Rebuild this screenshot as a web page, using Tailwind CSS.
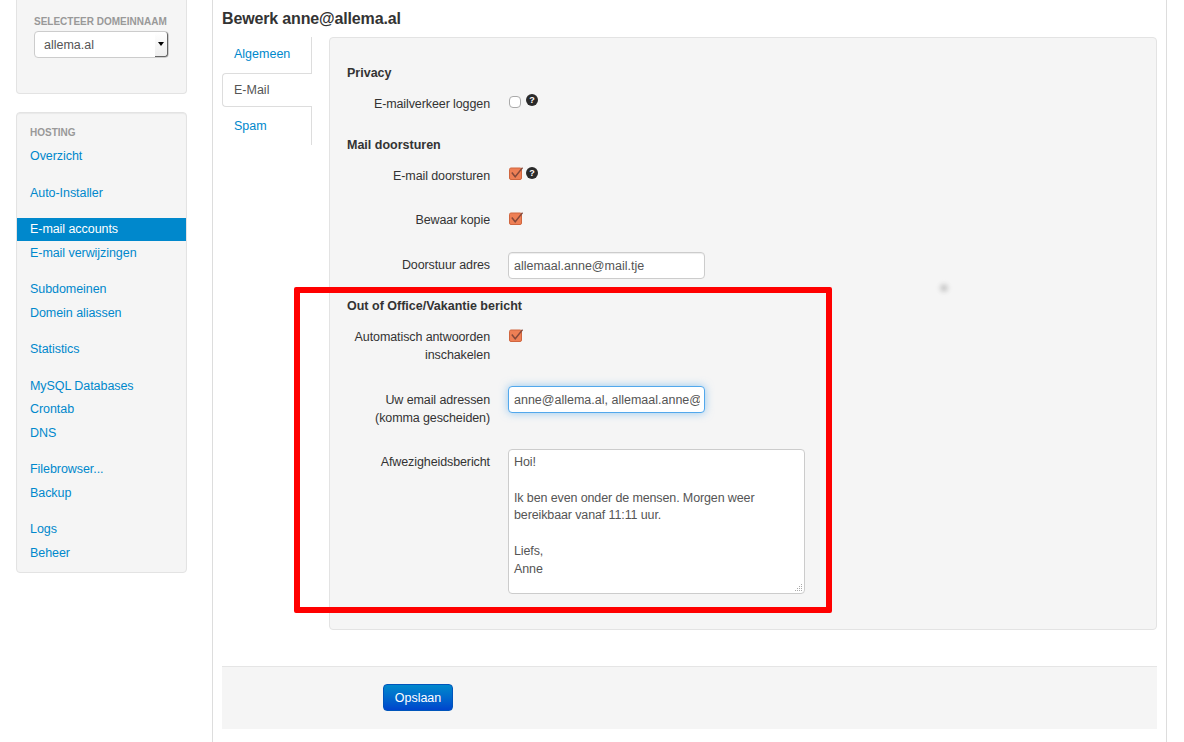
<!DOCTYPE html>
<html lang="nl">
<head>
    <meta charset="UTF-8">
    <title>Bewerk anne@allema.al</title>
    <script src="https://cdn.jsdelivr.net/npm/@tailwindcss/browser@4"></script>
</head>
<body class="relative flex w-[1184px] h-[742px] overflow-hidden bg-white text-[12.5px] leading-[18px] text-[#333] font-['Liberation_Sans',Arial,sans-serif]">

    <!-- Sidebar -->
    <aside class="ml-4 w-[171px] shrink-0">
        <div class="h-[94px] pt-[13px] pl-[17px] bg-[#f5f5f5] border-x border-b border-[#e3e3e3] rounded-b">
            <div class="text-[10px] leading-[18px] font-bold uppercase text-[#999]">Selecteer domeinnaam</div>
            <div class="relative w-[135px] h-[27px] pl-[9px] flex items-center bg-white border border-[#ccc] rounded text-[#555]">
                allema.al
                <span class="absolute right-0 top-0 bottom-0 w-[13px] flex items-center justify-center bg-gradient-to-b from-white to-[#eee] border-r border-b border-[#666] rounded-r-[3px]">
                    <span class="w-0 h-0 border-x-[3px] border-x-transparent border-t-[4px] border-t-black"></span>
                </span>
            </div>
        </div>

        <nav class="mt-[18px] h-[461px] pt-[11px] bg-[#f5f5f5] border border-[#e3e3e3] rounded shadow-[inset_0_1px_1px_rgba(0,0,0,0.05)]">
            <div class="pl-[13px] text-[10px] font-bold uppercase text-[#999]">Hosting</div>
            <ul class="mt-[2px] text-[#0088cc] tracking-[-0.06px]">
                <li class="h-6 pl-[13px] leading-6"><a href="#">Overzicht</a></li>
                <li class="h-6 pl-[13px] leading-6 mt-[13px]"><a href="#">Auto-Installer</a></li>
                <li class="h-[23px] pl-[13px] leading-[22px] mt-[13px] bg-[#0088cc] text-white"><a href="#">E-mail accounts</a></li>
                <li class="h-6 pl-[13px] leading-6"><a href="#">E-mail verwijzingen</a></li>
                <li class="h-6 pl-[13px] leading-6 mt-3"><a href="#">Subdomeinen</a></li>
                <li class="h-6 pl-[13px] leading-6"><a href="#">Domein aliassen</a></li>
                <li class="h-6 pl-[13px] leading-6 mt-3"><a href="#">Statistics</a></li>
                <li class="h-[23px] pl-[13px] leading-6 mt-[13px]"><a href="#">MySQL Databases</a></li>
                <li class="h-6 pl-[13px] leading-6"><a href="#">Crontab</a></li>
                <li class="h-6 pl-[13px] leading-6"><a href="#">DNS</a></li>
                <li class="h-6 pl-[13px] leading-6 mt-3"><a href="#">Filebrowser...</a></li>
                <li class="h-6 pl-[13px] leading-6"><a href="#">Backup</a></li>
                <li class="h-6 pl-[13px] leading-6 mt-3"><a href="#">Logs</a></li>
                <li class="h-6 pl-[13px] leading-6"><a href="#">Beheer</a></li>
            </ul>
        </nav>
    </aside>

    <!-- Main column -->
    <main class="ml-[25px] w-[955px] h-full px-[9px] border-x border-[#ddd]">
        <h1 class="h-[37px] pt-[10px] text-base leading-[18px] font-bold tracking-[-0.15px]">Bewerk anne@allema.al</h1>

        <div class="flex">
            <ul class="w-[90px] shrink-0 text-[#0088cc]">
                <li class="h-9 pl-3 pb-[2px] flex items-center border-r border-[#ddd]"><a href="#">Algemeen</a></li>
                <li class="h-[34px] pl-[11px] flex items-center bg-white border border-r-0 border-[#ddd] rounded-l text-[#555]"><a href="#">E-Mail</a></li>
                <li class="h-[38px] pl-3 flex items-center border-r border-[#ddd]"><a href="#">Spam</a></li>
            </ul>

            <div class="ml-[17px] w-[828px] h-[593px] pt-[25px] pl-[17px] bg-[#f5f5f5] border border-[#e3e3e3] rounded">
                <h2 class="pt-px font-bold">Privacy</h2>
                <div class="mt-3 flex items-start">
                    <label class="w-[143px] pt-px text-right tracking-[-0.1px]">E-mailverkeer loggen</label>
                    <span class="ml-[19px] mt-[2px] w-3 h-3 bg-white border border-[#aaa] rounded-sm"></span>
                    <span class="ml-[5px] w-3 h-3 rounded-full bg-[#2a2a2a] text-white text-[9px] leading-3 font-bold text-center">?</span>
                </div>

                <h2 class="mt-[22px] pt-px font-bold">Mail doorsturen</h2>
                <div class="mt-3 flex items-start">
                    <label class="w-[143px] pt-px text-right tracking-[-0.1px]">E-mail doorsturen</label>
                    <svg class="ml-[19px] mt-[1px]" width="14" height="13" viewBox="0 0 14 13"><rect x="0.5" y="1" width="12" height="11.5" rx="1.5" fill="#ee7f55" stroke="#d0663f"/><path d="M2.8 5.5l3.4 4.3L13.6 .6" fill="none" stroke="#86493a" stroke-width="1.5"/></svg>
                    <span class="ml-[3px] mt-px w-3 h-3 rounded-full bg-[#2a2a2a] text-white text-[9px] leading-3 font-bold text-center">?</span>
                </div>
                <div class="mt-[25px] flex items-start">
                    <label class="w-[143px] pt-px text-right tracking-[-0.1px]">Bewaar kopie</label>
                    <svg class="ml-[19px] mt-[2px]" width="14" height="13" viewBox="0 0 14 13"><rect x="0.5" y="1" width="12" height="11.5" rx="1.5" fill="#ee7f55" stroke="#d0663f"/><path d="M2.8 5.5l3.4 4.3L13.6 .6" fill="none" stroke="#86493a" stroke-width="1.5"/></svg>
                </div>
                <div class="mt-[23px] flex items-start">
                    <label class="w-[143px] pt-1 text-right tracking-[-0.1px]">Doorstuur adres</label>
                    <input value="allemaal.anne@mail.tje" class="ml-[18px] w-[197px] h-[27px] pl-[5px] pr-1 bg-white border border-[#ccc] rounded text-[#555] shadow-[inset_0_1px_1px_rgba(0,0,0,0.075)]">
                </div>

                <h2 class="mt-[17px] pt-px font-bold">Out of Office/Vakantie bericht</h2>
                <div class="mt-3 flex items-start">
                    <label class="w-[143px] pt-px text-right tracking-[-0.1px]">Automatisch antwoorden inschakelen</label>
                    <svg class="ml-[19px] mt-[2px]" width="14" height="13" viewBox="0 0 14 13"><rect x="0.5" y="1" width="12" height="11.5" rx="1.5" fill="#ee7f55" stroke="#d0663f"/><path d="M2.8 5.5l3.4 4.3L13.6 .6" fill="none" stroke="#86493a" stroke-width="1.5"/></svg>
                </div>
                <div class="mt-[22px] flex items-start">
                    <label class="w-[143px] pt-[5px] text-right tracking-[-0.1px]">Uw email adressen (komma gescheiden)</label>
                    <input value="anne@allema.al, allemaal.anne@allema.al" class="ml-[18px] w-[197px] h-[27px] pl-[5px] pr-1 bg-white border border-[#52a8ec] rounded text-[#555] shadow-[0_0_8px_rgba(82,168,236,0.6)]">
                </div>
                <div class="mt-[22px] flex items-start">
                    <label class="w-[143px] pt-1 text-right tracking-[-0.1px]">Afwezigheidsbericht</label>
                    <div class="relative ml-[18px] w-[297px] h-[145px]">
                        <textarea class="block w-full h-full py-1 px-[5px] resize-none bg-white border border-[#ccc] rounded-sm text-[#555] leading-[17.75px] tracking-[-0.12px]">Hoi!

Ik ben even onder de mensen. Morgen weer bereikbaar vanaf 11:11 uur.

Liefs,
Anne</textarea>
                        <svg class="absolute right-[2px] bottom-[2px]" width="9" height="9" viewBox="0 0 9 9" fill="#aaa"><rect x="7" y="1" width="1" height="1"/><rect x="5" y="3" width="1" height="1"/><rect x="7" y="3" width="1" height="1"/><rect x="3" y="5" width="1" height="1"/><rect x="5" y="5" width="1" height="1"/><rect x="7" y="5" width="1" height="1"/><rect x="1" y="7" width="1" height="1"/><rect x="3" y="7" width="1" height="1"/><rect x="5" y="7" width="1" height="1"/><rect x="7" y="7" width="1" height="1"/></svg>
                    </div>
                </div>
            </div>
        </div>

        <div class="mt-9 h-[63px] pt-[17px] pl-[161px] bg-[#f5f5f5] border-t border-[#e5e5e5]">
            <button class="w-[70px] h-[27px] rounded text-white bg-gradient-to-b from-[#0088cc] to-[#0044cc] border border-[#0055bb]">Opslaan</button>
        </div>
    </main>

    <!-- Annotation drawn over the screenshot -->
    <div class="absolute left-[294px] top-[287px] w-[538px] h-[326px] border-[6px] border-[#ff0000] rounded-[2px]"></div>
    <div class="absolute left-[940px] top-[284px] w-2 h-2 rounded-full bg-[#ccc] blur-[2px]"></div>
</body>
</html>
